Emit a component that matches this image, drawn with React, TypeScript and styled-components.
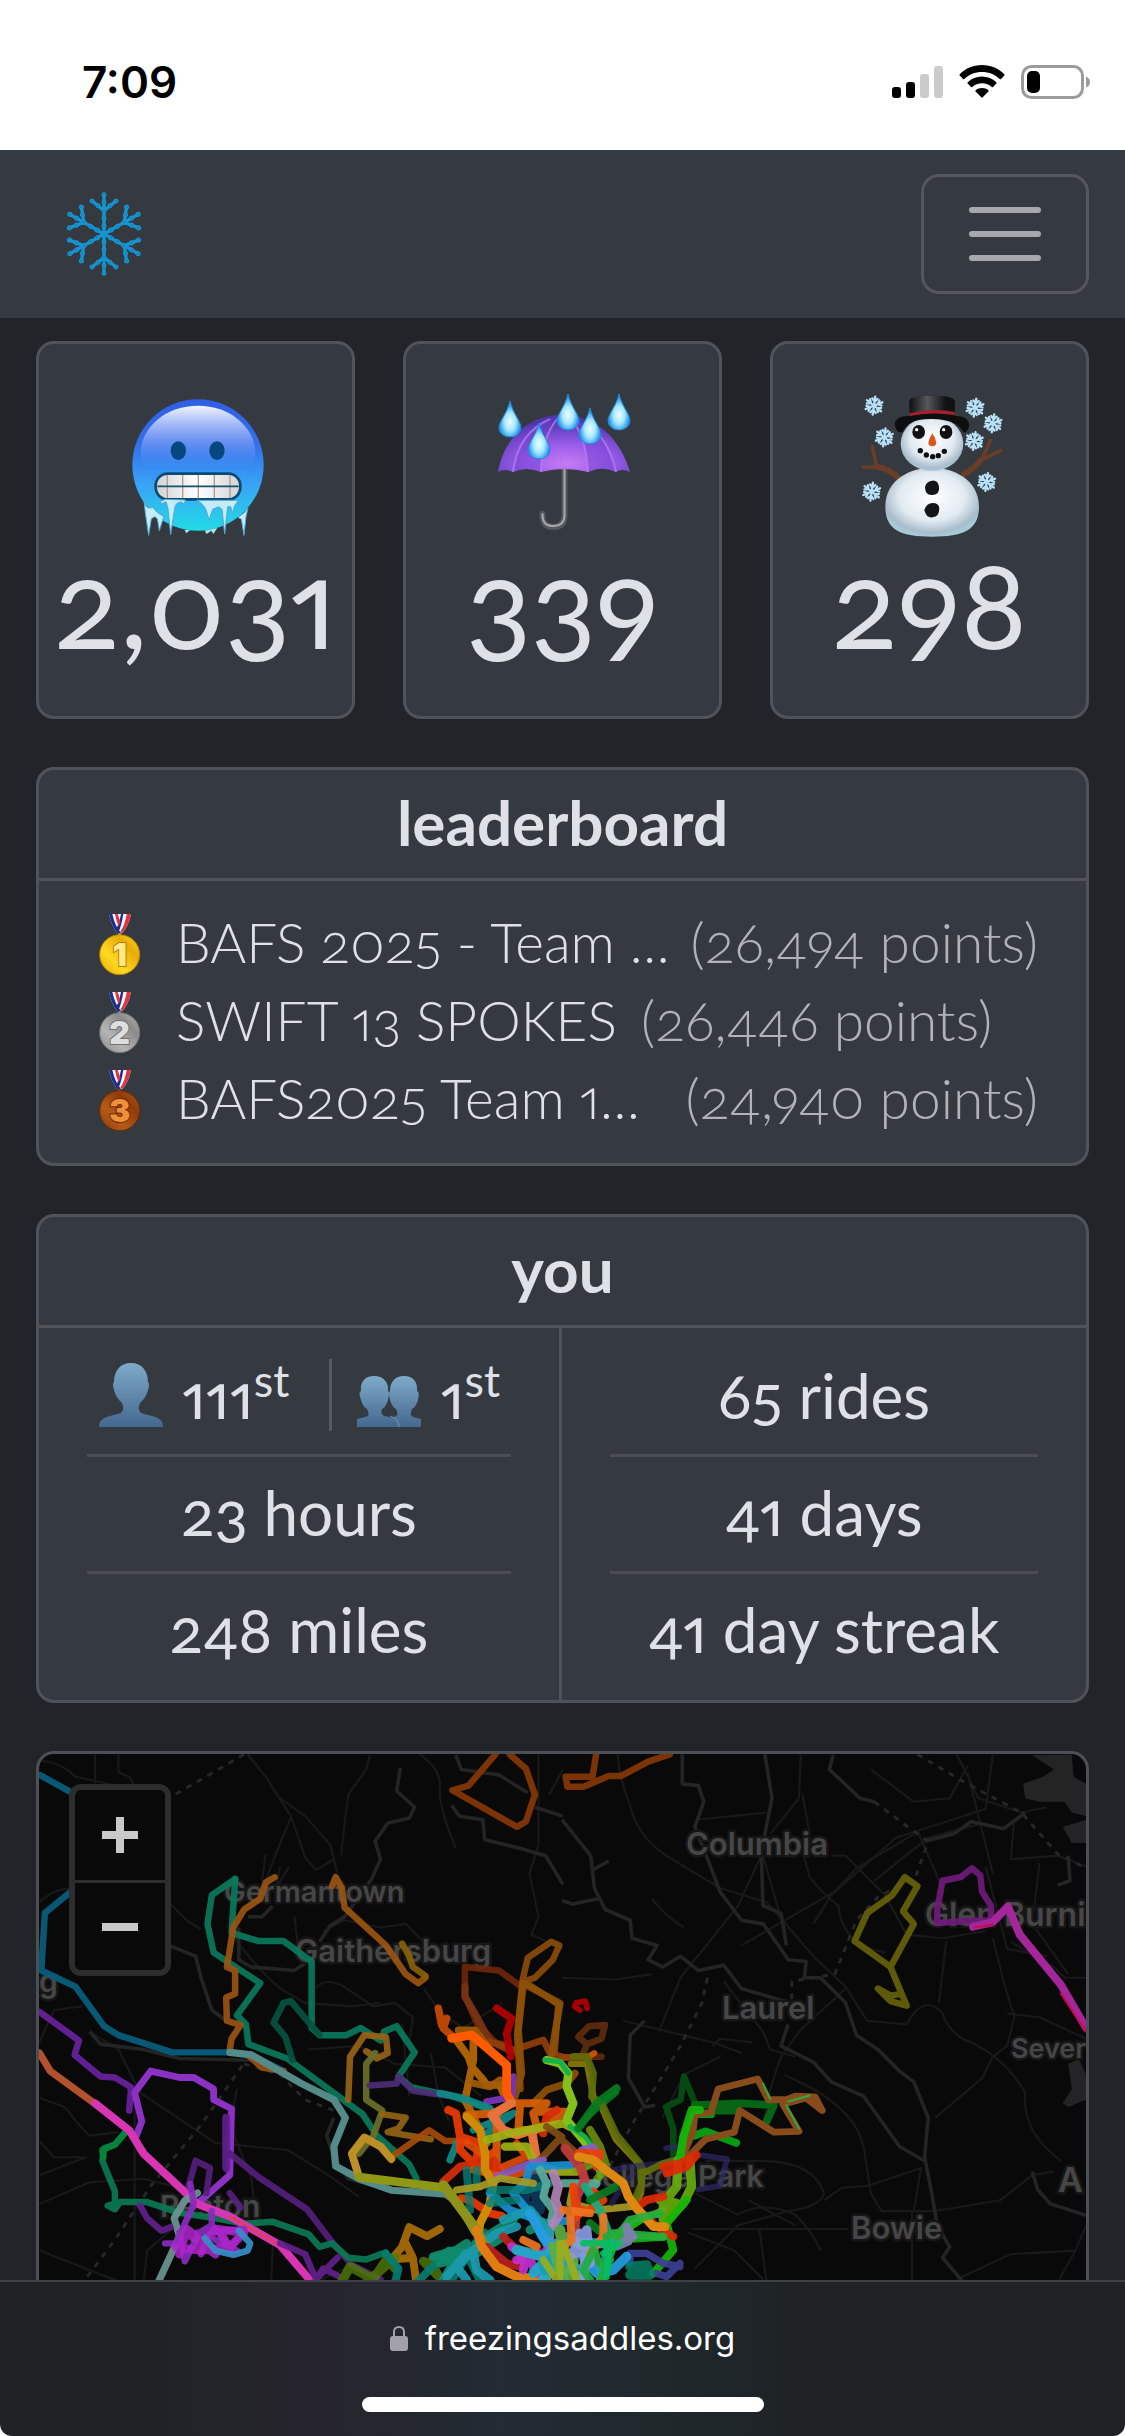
import React from "react";
import styled, { createGlobalStyle } from "styled-components";

const GlobalStyle = createGlobalStyle`
  *, *::before, *::after { box-sizing: border-box; }
  html, body { margin: 0; padding: 0; background: #ffffff; }
  body { font-family: Lato, "Open Sans", sans-serif; color: #dee2e6; font-variant-numeric: oldstyle-nums proportional-nums; }
  h2, p, ol, ul { margin: 0; padding: 0; }
`;

const border = "#505459";
const panel = "#353a40";

const Screen = styled.div`
  display: flex;
  flex-direction: column;
  min-height: 2000px;
  height: 100vh;
`;

const StatusBar = styled.header`
  flex: none;
  display: flex;
  align-items: center;
  justify-content: space-between;
  height: 150px;
  padding: 14px 34px 0 82px;
  background: #ffffff;
  color: #000000;
`;

const Time = styled.time`
  font: 600 44px/48px Inter, sans-serif;
  font-variant-numeric: normal;
`;

const StatusIcons = styled.div`
  display: flex;
  align-items: center;
  gap: 16px;
`;

const Nav = styled.nav`
  flex: none;
  display: flex;
  align-items: center;
  justify-content: space-between;
  padding: 24px 36px;
  background: ${panel};
`;

const Brand = styled.a`
  display: flex;
  padding: 0 24px;
`;

const MenuButton = styled.button`
  display: flex;
  flex-direction: column;
  align-items: center;
  justify-content: center;
  gap: 18px;
  width: 168px;
  height: 120px;
  padding: 0;
  background: transparent;
  border: 3px solid #54585d;
  border-radius: 18px;
`;

const MenuLine = styled.span`
  width: 72px;
  height: 6px;
  border-radius: 3px;
  background: #a6a8ab;
`;

const Main = styled.main`
  flex: 1;
  min-height: 0;
  display: flex;
  flex-direction: column;
  gap: 48px;
  padding: 23px 36px 0;
  background: #212529;
`;

const Stats = styled.ul`
  display: grid;
  grid-template-columns: repeat(3, 1fr);
  gap: 48px;
  list-style: none;
`;

const Card = styled.section`
  flex: none;
  background: ${panel};
  border: 3px solid ${border};
  border-radius: 18px;
  overflow: hidden;
`;

const StatCard = styled.li`
  display: flex;
  flex-direction: column;
  align-items: center;
  padding: 48px 0 52px;
  background: ${panel};
  border: 3px solid ${border};
  border-radius: 18px;
`;

const StatValue = styled.span`
  font-size: 122px;
  line-height: 124px;
`;

const CardTitle = styled.h2`
  padding: 16px 18px 20px;
  border-bottom: 3px solid ${border};
  text-align: center;
  font-size: 62px;
  line-height: 72px;
  font-weight: 700;
`;

const Ranks = styled.ol`
  padding: 24px 48px 24px 58px;
  list-style: none;
`;

const RankRow = styled.li`
  display: flex;
  align-items: center;
  height: 78px;
  font-size: 55px;
  line-height: 72px;
  font-weight: 300;
  white-space: nowrap;
`;

const TeamName = styled.span<{ $fill?: boolean }>`
  flex: ${(p) => (p.$fill ? "1 1 0" : "0 1 auto")};
  min-width: 0;
  overflow: hidden;
  text-overflow: ellipsis;
  padding-bottom: 4px;
  margin-left: 34px;
  margin-right: ${(p) => (p.$fill ? "4px" : "24px")};
`;

const Points = styled.span`
  padding-bottom: 4px;
  color: #b0b4b8;
`;

const YouGrid = styled.div`
  display: grid;
  grid-template-columns: 523fr 524fr;
`;

const YouColumn = styled.div`
  display: flex;
  flex-direction: column;
  padding: 12px 48px;
  &:first-child { border-right: 3px solid ${border}; }
`;

const YouCell = styled.div`
  display: flex;
  align-items: center;
  justify-content: center;
  height: 114px;
  padding-bottom: 4px;
  font-size: 62px;
  line-height: 90px;
  white-space: nowrap;
  font-weight: 400;
  & + & { border-top: 3px solid #4a4e53; height: 117px; }
`;

const RankStat = styled.span`
  display: flex;
  align-items: center;
  gap: 18px;
  height: 72px;
  padding-right: 40px;
  line-height: 72px;
  & + & { border-left: 3px solid #565a5f; padding: 0 0 0 24px; }
`;

const Sup = styled.sup`
  font-size: 45px;
  line-height: 0;
`;

const MapPanel = styled.section`
  flex: 1;
  min-height: 0;
  position: relative;
  overflow: hidden;
  background: #090909;
  border: 3px solid #4c5055;
  border-bottom: 0;
  border-radius: 18px 18px 0 0;
`;

const MapSvg = styled.svg`
  display: block;
  width: 100%;
  height: 100%;
`;

const ZoomControl = styled.div`
  position: absolute;
  top: 30px;
  left: 30px;
  display: flex;
  flex-direction: column;
  border: 6px solid #2d2d2d;
  border-radius: 12px;
  overflow: hidden;
`;

const ZoomButton = styled.button`
  display: flex;
  align-items: center;
  justify-content: center;
  width: 90px;
  height: 90px;
  padding: 0;
  border: 0;
  background: #090909;
  & + & { border-top: 3px solid #2d2d2d; }
`;

const BrowserBar = styled.footer`
  flex: none;
  display: flex;
  flex-direction: column;
  align-items: center;
  height: 156px;
  padding-top: 34px;
  border-top: 2px solid #3e4144;
  border-radius: 0 0 12px 12px;
  background: linear-gradient(90deg, #1f2326 0%, #1f2326 14%, #26242c 27%, #24272f 36%, #222b34 46%, #1f282b 58%, #1e2225 72%, #1e2225 100%);
`;

const Address = styled.a`
  display: flex;
  align-items: center;
  gap: 17px;
  color: #ffffff;
  text-decoration: none;
  font: 400 33px/44px Inter, sans-serif;
`;

const HomeIndicator = styled.div`
  width: 402px;
  height: 15px;
  margin-top: 37px;
  border-radius: 8px;
  background: #ffffff;
`;

function SignalIcon() {
  return (
    <svg width="51" height="34" viewBox="0 0 51 34" aria-hidden="true">
      <rect x="0" y="22" width="9" height="11" rx="3" />
      <rect x="14" y="17" width="9" height="16" rx="3" />
      <rect x="28" y="9" width="9" height="24" rx="3" fill="#cbcbcb" />
      <rect x="42" y="1" width="9" height="32" rx="3" fill="#cbcbcb" />
    </svg>
  );
}

function WifiIcon() {
  return (
    <svg width="46" height="34" viewBox="0 0 46 34" aria-hidden="true">
      <path d="M23 0C14 0 6 3.600 0.700 9.300Q0.200 10 0.700 10.600L4 14Q4.700 14.600 5.300 14C10 9.400 16 6.900 23 6.900S36 9.400 40.700 14Q41.300 14.600 42 14L45.300 10.600Q45.800 10 45.300 9.300C40 3.600 32 0 23 0Z" />
      <path d="M23 11.500C17.500 11.500 12.500 13.600 8.700 17.200Q8 17.900 8.700 18.500L12 21.900Q12.700 22.500 13.300 21.900C16 19.500 19.300 18.300 23 18.300S30 19.500 32.700 21.900Q33.300 22.500 34 21.900L37.300 18.500Q38 17.900 37.300 17.200C33.500 13.600 28.500 11.500 23 11.500Z" />
      <path d="M23 23C20.500 23 18.300 23.800 16.600 25.200Q16 25.900 16.600 26.500L22.300 32.300Q23 33 23.700 32.300L29.400 26.500Q30 25.900 29.400 25.200C27.700 23.800 25.500 23 23 23Z" />
    </svg>
  );
}

function BatteryIcon() {
  return (
    <svg width="70" height="34" viewBox="0 0 70 34" aria-hidden="true">
      <rect x="1.500" y="1.500" width="60" height="31" rx="9" fill="none" stroke="#9b9b9b" strokeWidth="3" />
      <rect x="6" y="6" width="13" height="22" rx="5" />
      <path d="M65 11.500Q69 13 69 17T65 22.500Z" fill="#9b9b9b" />
    </svg>
  );
}

function SnowflakeLogo() {
  return (
    <svg width="88" height="88" viewBox="-132 -132 264 264" role="img" aria-label="Freezing Saddles">
      {[0, 60, 120, 180, 240, 300].map((a) => (
        <g key={a} transform={`rotate(${a})`}>
          <path d="M0 0V-118M0 -70L-36 -99M0 -70L36 -99" fill="none" stroke="#1594d2" strokeWidth="10" strokeLinecap="round" />
          {[[0, -118], [0, -95], [0, -70], [0, -46], [0, -23], [-18, -85], [18, -85], [-36, -99], [36, -99]].map(([x, y]) => (
            <circle key={`${x},${y}`} cx={x} cy={y} r="6" fill="#1687be" stroke="#149bdc" strokeWidth="3" />
          ))}
        </g>
      ))}
    </svg>
  );
}

function FreezingFace() {
  return (
    <svg width="148" height="148" viewBox="364 216 444 444" role="img" aria-label="Freezing days">
      <defs>
        <linearGradient id="face" x1="0" y1="0" x2="0" y2="1">
          <stop offset="0" stopColor="#2f5fe6" />
          <stop offset=".35" stopColor="#3470ea" />
          <stop offset=".65" stopColor="#38a4f6" />
          <stop offset="1" stopColor="#22dbe6" />
        </linearGradient>
        <linearGradient id="shine" x1="0" y1="0" x2="0" y2="1">
          <stop offset="0" stopColor="#f1f6ff" />
          <stop offset=".3" stopColor="#9db2f8" stopOpacity=".75" />
          <stop offset=".65" stopColor="#5f92f8" stopOpacity="0" />
        </linearGradient>
        <linearGradient id="teeth" x1="0" y1="0" x2="1" y2="0">
          <stop offset="0" stopColor="#d2d2d4" />
          <stop offset=".5" stopColor="#ffffff" />
          <stop offset="1" stopColor="#d2d2d4" />
        </linearGradient>
      </defs>
      <circle cx="592" cy="435" r="197" fill="url(#face)" />
      <ellipse cx="592" cy="400" rx="172" ry="143" fill="url(#shine)" />
      <ellipse cx="533" cy="392" rx="23" ry="28" fill="#07477f" />
      <ellipse cx="649" cy="392" rx="23" ry="28" fill="#07477f" />
      <rect x="465" y="461" width="254" height="77" rx="36" fill="url(#teeth)" stroke="#0b4a73" strokeWidth="8" />
      <path d="M500 466V534M546 465V535M593 465V535M641 465V535M688 466V534" stroke="#a99c94" strokeWidth="4" />
      <path d="M470 499H714" stroke="#17506d" strokeWidth="5" />
      <path d="M430 540L436 558Q442 568 456 562Q466 578 490 590L486 600L476 632L470 596L462 590L452 596L444 646L434 580ZM480 544L494 538L554 540L551 552L542 546Q530 546 524 556L518 590L510 644L502 566L496 545L482 552ZM588 541H714L702 556L696 580L690 560L681 560L672 642L664 568L654 560L636 568L625 600L617 572Q608 550 588 541ZM742 564L736 590L730 646L722 598L712 592Q730 582 742 564Z" fill="#c6ebf8" stroke="#4eaad0" strokeWidth="3" />
      <path d="M552 630H568L557 640ZM612 632L650 624L638 642L632 632L618 642Z" fill="#a4e6f4" />
    </svg>
  );
}

function Drop({ x, y }: { x: number; y: number }) {
  return <path transform={`translate(${x} ${y})`} d="M0 0C3 13 11 20 11 27A11 9 0 0 1 -11 27C-11 20 -3 13 0 0Z" fill="url(#drop)" stroke="#2587d5" strokeWidth="1" />;
}

function UmbrellaIcon() {
  return (
    <svg width="148" height="148" viewBox="109 72 148 148" role="img" aria-label="Rainy days">
      <defs>
        <radialGradient id="canopy" cx=".52" cy=".85" r=".75">
          <stop offset="0" stopColor="#c57bf5" />
          <stop offset=".45" stopColor="#9a5cea" />
          <stop offset="1" stopColor="#4e35ae" />
        </radialGradient>
        <radialGradient id="drop" cx=".5" cy=".58" r=".5">
          <stop offset="0" stopColor="#effcff" />
          <stop offset=".5" stopColor="#a5e8ff" />
          <stop offset="1" stopColor="#1c91e8" />
        </radialGradient>
      </defs>
      <path d="M184.500 148V196Q184 207 173 207T162.500 194" fill="none" stroke="#55575b" strokeWidth="6" strokeLinecap="round" />
      <path d="M184.500 148V196Q184 206 173 206T162.500 194" fill="none" stroke="#a7a9ad" strokeWidth="2" strokeLinecap="round" />
      <path d="M118 152C124 118 148 95 182 95S240 118 250 152Q241 148 236 152Q222 145 208 152Q184 146 161 152Q146 146 133 152Q125 148 118 152Z" fill="url(#canopy)" />
      <path d="M133 152Q138 112 176 96Q160 116 161 152Q146 146 133 152ZM208 152Q206 115 190 96Q226 110 236 152Q222 145 208 152Z" fill="#7140d0" opacity=".45" />
      <path d="M133 152Q138 113 170 99M161 152Q162 116 178 98M208 152Q206 115 190 98M236 152Q228 116 204 102" fill="none" stroke="#bd7df6" strokeWidth="2" opacity=".7" />
      <Drop x={130} y={81} /><Drop x={188} y={74} /><Drop x={239} y={74} /><Drop x={210} y={88} /><Drop x={159} y={103} />
    </svg>
  );
}

const flakes = [[70, 107], [101, 202], [63, 365], [373, 113], [427, 160], [371, 213], [408, 336]];

function SnowmanIcon() {
  return (
    <svg width="148" height="148" viewBox="16 66 444 444" role="img" aria-label="Snowy days">
      <defs>
        <radialGradient id="snow" cx=".5" cy=".42" r=".58">
          <stop offset="0" stopColor="#ffffff" />
          <stop offset=".6" stopColor="#e2ebf2" />
          <stop offset=".9" stopColor="#a9bccb" />
          <stop offset="1" stopColor="#a5cbd8" />
        </radialGradient>
        <linearGradient id="hat" x1="0" y1="0" x2="1" y2="0">
          <stop offset="0" stopColor="#101113" />
          <stop offset=".4" stopColor="#55575a" />
          <stop offset=".8" stopColor="#111214" />
        </linearGradient>
      </defs>
      <g fill="none" stroke="#6a3d28" strokeLinejoin="round">
        <path d="M146 326Q115 296 78 290M334 316Q372 296 394 266" strokeWidth="17" />
        <path d="M78 290L65 230M82 292L38 291M394 268L419 212M394 270L450 241" strokeWidth="11" strokeLinecap="round" />
      </g>
      <path d="M244 294C196 290 104 320 104 410C104 480 150 500 244 500S385 480 385 410C385 320 292 290 244 294Z" fill="url(#snow)" />
      <ellipse cx="244" cy="221" rx="94" ry="82" fill="url(#snow)" />
      <path d="M132 162Q135 136 178 138L176 92Q184 77 244 77T312 92L312 138Q352 136 356 164Q350 194 336 184Q318 148 244 147T156 186Q136 192 132 162Z" fill="#0d0e10" />
      <path d="M176 92Q184 77 244 77T312 92L312 124Q250 116 178 132Z" fill="url(#hat)" />
      <path d="M178 130Q244 112 312 126V136Q244 124 178 138Z" fill="#a3202d" />
      <ellipse cx="204" cy="186" rx="19" ry="21" fill="#111" /><ellipse cx="286" cy="186" rx="19" ry="21" fill="#111" />
      <circle cx="198" cy="179" r="5" fill="#fff" /><circle cx="279" cy="179" r="5" fill="#fff" />
      <path d="M245 190Q256 205 257 219Q255 229 245 229T233 219Q235 204 245 190Z" fill="#d9581f" />
      {[[209, 242], [227, 255], [246, 260], [263, 257], [281, 244]].map(([x, y]) => <circle key={x} cx={x} cy={y} r="8" fill="#0d0e10" />)}
      <path d="M223 352Q226 334 244 332T265 350Q268 372 246 375T223 352Z" fill="#141516" />
      <path d="M221 420Q228 399 246 399T266 414Q266 440 246 442T221 420Z" fill="#141516" />
      {flakes.map(([x, y]) => (
        <g key={x} transform={`translate(${x} ${y}) rotate(8)`} stroke="#b8e2f8" strokeWidth="7" strokeLinecap="round" fill="none">
          {[0, 60, 120, 180, 240, 300].map((a) => <path key={a} transform={`rotate(${a})`} d="M0 0V-27M0 -12L-8 -21M0 -12L8 -21" />)}
        </g>
      ))}
    </svg>
  );
}

const medals = [
  { light: "#ffd91f", base: "#e7ab09", edge: "#b97d06", ink: "#ffe88a" },
  { light: "#b4b4b4", base: "#8b8b8b", edge: "#727272", ink: "#dedede" },
  { light: "#b55a18", base: "#8f3a0a", edge: "#6f2a05", ink: "#f0903a" },
];

function Medal({ place }: { place: number }) {
  const m = medals[place - 1];
  return (
    <svg width="45" height="63" viewBox="50 36 135 189" role="img" aria-label={`Place ${place}`}>
      <defs>
        <linearGradient id={`medal${place}`} x1="0" y1="1" x2="1" y2="0">
          <stop offset="0" stopColor={m.base} /><stop offset=".35" stopColor={m.light} /><stop offset=".7" stopColor={m.base} /><stop offset="1" stopColor={m.light} />
        </linearGradient>
      </defs>
      <path d="M86 39H152Q145 75 126 96H110Q94 76 86 39Z" fill="#f4f6fb" />
      <path d="M86 39H96Q104 76 122 96H110Q94 76 86 39ZM122 39H129Q123 76 114 94L108 84Q119 62 122 39Z" fill="#1c2f8d" />
      <path d="M104 39H112L120 62L115 76Q108 62 104 39ZM139 39H152Q145 75 126 96L120 92Q134 72 139 39Z" fill="#dd3543" />
      <circle cx="118" cy="103" r="6" fill={m.light} />
      <circle cx="118" cy="161" r="60" fill={`url(#medal${place})`} stroke={m.edge} strokeWidth="3" />
      <text x="118" y="195" textAnchor="middle" fontFamily="Inter, sans-serif" fontWeight="900" fontSize="96" fill={m.ink} stroke={m.edge} strokeWidth="6" paintOrder="stroke" style={{ fontVariantNumeric: "normal" }}>{place}</text>
    </svg>
  );
}

function PersonIcon() {
  return (
    <svg width="66" height="66" viewBox="0 0 66 66" role="img" aria-label="Individual rank">
      <defs>
        <linearGradient id="bust" x1="0" y1="0" x2="0" y2="1"><stop offset="0" stopColor="#7eaac9" /><stop offset="1" stopColor="#44688e" /></linearGradient>
      </defs>
      <path d="M33 1C22 1 16 9 16 20Q14 22 16 28Q18 36 24 41Q28 50 20 52C8 55 1 56 1 65H65C65 56 58 55 46 52Q38 50 42 41Q48 36 50 28Q52 22 50 20C50 9 44 1 33 1Z" fill="url(#bust)" />
    </svg>
  );
}

function PeopleIcon() {
  return (
    <svg width="66" height="66" viewBox="0 0 66 66" role="img" aria-label="Team rank">
      <path d="M18 14C9 14 4 20 5 29Q2 30 5 38Q7 45 11 47Q15 54 9 55L1 57V65H43V57L28 54Q24 51 26 47Q30 45 32 38Q34 30 32 29C33 20 27 14 18 14Z" fill="url(#bust)" />
      <path d="M48 14C39 14 34 20 34 29Q32 30 34 38Q36 45 40 47Q44 54 37 55Q43 58 43 65H65V57L57 55Q53 53 56 47Q60 45 62 38Q64 30 61 29C62 20 57 14 48 14Z" fill="url(#bust)" />
      <path d="M34 54Q43 57 43 65" fill="none" stroke="#7298b9" strokeWidth="1" />
    </svg>
  );
}

type Line = [color: string, d: string, width?: number, opacity?: number];

/* Road network, west and east halves of the tile set */
const westRoads = [
  "M110 85Q170 90 210 130L264 142L350 160M265 68V150M330 68V118L360 130L382 170",
  "M690 68L740 130L810 240L850 355L880 390L930 360M780 190L850 240L920 320L940 400M810 245L770 340L740 420",
  "M1030 70L1020 110L970 180L960 260L950 350M1170 68Q1230 110 1225 160T1270 330",
  "M110 480Q150 440 210 440M470 480L520 530L560 555M740 345L730 420M780 380L770 440L805 380",
  "M640 560Q700 650 780 720L850 760L980 770L1060 760M820 520L830 600M900 560L960 530L1060 550L1130 540L1190 600",
  "M880 720Q900 690 950 710L1040 770L1100 760L1150 800L1140 870M1180 720L1230 790L1290 830",
  "M110 870L150 780L230 770M250 840L330 890L390 1010L600 1150L800 1170L900 1230L1000 1300",
  "M110 1025L180 1050L220 1100L250 1130L330 1120M110 1145L150 1190L240 1190L110 1240M375 990L375 1540",
  "M110 1450L340 1540M400 1540L410 1450L480 1390M755 1540L760 1430M980 1490Q900 1530 870 1540",
  "M860 890L1000 880L1100 930L1240 940L1340 1020M1200 900L1220 1010L1250 1090M1120 820L1140 1020",
  "M1500 68V320L1475 400L1500 520L1480 570L1568 610M1530 180L1568 110M1290 830L1400 760",
  "M660 1000L640 1100L700 1250L720 1400M110 1320L250 1260L400 1250L560 1290",
];
const westWater = [
  "M1115 105L1105 170L1155 215L1140 245L1080 260L1045 310L1060 360L1035 415L960 520L920 545L890 590",
  "M470 600L545 630L560 690L590 780L630 810M250 840L280 875L400 890L500 915L700 920",
  "M1270 70L1285 110L1390 125L1470 175M1258 210L1280 240L1345 250L1350 305L1450 330L1520 350L1568 430",
  "M930 1080L910 1130L930 1190L970 1250L1100 1285L1240 1300M665 550L665 640L700 660L820 670L850 650M690 520L730 520L760 490",
  "M1490 215L1568 240",
];
const eastRoads = [
  "M155 68Q160 140 190 210Q205 290 290 350L440 440L570 480L640 560L700 630L790 715L850 810L960 820Q1010 730 1060 790Q1080 850 1140 870Q1240 920 1290 1010Q1280 1120 1390 1200",
  "M580 290L660 190L665 70M375 250L570 230M670 180L690 290M750 350L790 350L900 460L960 570L1060 580L1180 560M500 600L760 450L820 385L980 290",
  "M560 340L490 490L370 640L330 690L270 840M250 470Q290 520 340 550M0 690L150 695L250 680M170 810L420 870L500 900",
  "M560 350L620 560M670 340L690 410Q720 450 770 490Q780 600 900 620M790 720L660 840L610 910L580 1000L560 1100",
  "M700 540L750 460L930 300L1180 220L1200 70M860 110L980 200L1080 190L1130 100M870 420L1020 300L1170 260",
  "M1100 68L1160 190L1280 230L1350 215M990 280L1020 350L1060 440M1180 380L1240 610L1350 630",
  "M1200 580L1230 700L1260 800L1240 880L1200 910L1170 970L1040 1080M1250 590L1370 660L1400 690H1460",
  "M1130 120L1200 400M1260 250L1250 360L1380 350L1460 380M1330 370L1310 540L1410 680M1240 790L1330 800L1460 860",
  "M620 960L700 1000Q820 1070 840 1160L860 1290L890 1340L1040 1340L1220 1310L1310 1240L1370 1230",
  "M400 1200L550 1200Q700 1200 730 1290Q720 1330 630 1340L490 1380L370 1500M370 1290L490 1350Q560 1310 650 1350Q700 1400 720 1450",
  "M360 1390H570L800 1390M550 1390L570 1540M975 1340V1540M520 1310L650 1380M730 1310L780 1275L850 1270L1000 1220L980 1340",
  "M1100 1530L1250 1460L1430 1450L1460 1380M1430 1450L1380 1540M350 1400L480 1450L560 1530M1070 590L1050 760",
  "M420 880L440 860L530 870M450 700L560 840L580 890L650 910M280 1080L340 960L440 910",
];
const eastWater = [
  "M335 68V150L380 155L395 200L370 270L410 370L440 450L500 530L560 540L610 610L630 640L680 645L675 690L720 690L790 760L820 850L880 890L940 950L980 980L1020 1080L1010 1190L1030 1290L1045 1380L1080 1440L1060 1470L1120 1540",
  "M565 68L585 190L555 340L560 490L610 510L625 600",
  "M0 250L80 350L90 440L120 500L190 530L195 580L265 600L240 640L280 660L330 630L380 670L450 655L500 720L600 750L640 760",
  "M755 70L745 110L830 190L870 200M1010 310L1090 290L1140 255L1230 275L1290 230",
  "M630 820L610 880L700 925L750 980L840 1020L890 1090L940 1160L1010 1200M230 810L190 850L185 970L230 1050L260 1045",
  "M1310 1230L1325 1280L1360 1320L1460 1352M1410 350L1415 420L1380 432M0 475L30 485L100 470M85 390L130 365",
];
const borders = ["M680 68L470 190", "M675 935L560 1100L420 1270L320 1420L230 1540", "M680 930L780 960L850 1030L930 1060"];
const eastBorders = ["M990 68L1120 145L1280 230L1380 345L1460 385", "M870 200L990 290L1020 310L985 410L880 465L820 530L760 680L640 700L640 750", "M405 690L390 760L330 880L270 980L200 1090L130 1220"];

/* Ride tracks */
const westRides: Line[] = [
  ["#08607e", "M110 125L210 180M210 440L125 510L115 670L210 715L290 825L330 850L480 898H640L700 905L790 950"],
  ["#0a7a5c", "M655 415L590 460L578 540L595 620L725 705L660 795L685 820L692 875L800 915L1010 1070L1050 1130L1140 1210L1160 1250"],
  ["#0a7a5c", "M655 415L645 565L720 588H790L868 645V830L890 850H965L1005 830L1060 865L1070 840L1105 825L1155 898L1110 965L1145 995L1260 1020L1370 1060"],
  ["#07523f", "M815 920L795 855L762 815L790 760L810 755L890 850"],
  ["#9b5413", "M765 410L740 425L725 470L680 500L650 550L632 660L655 670V735L630 745L632 810L670 822L645 860L640 890M690 905L730 940L790 950"],
  ["#9b5413", "M925 435L935 410L952 440L960 495L1075 600L1130 680L1165 705L1185 690"],
  ["#876108", "M1120 595L1140 630L1150 660L1185 685"],
  ["#6e260c", "M1295 740V660L1390 670L1445 710M1295 740L1330 820L1390 880L1430 900"],
  ["#873705", "M1380 68L1305 155L1260 168L1440 270L1465 255L1490 180L1465 108L1420 68"],
  ["#8b4c0a", "M1450 1000L1440 850L1455 700L1470 635L1535 590L1558 600L1540 640L1490 690L1460 700L1555 765L1545 900"],
  ["#548b89", "M640 898L700 905L840 985L930 1030L962 1080L930 1160L935 1215L1000 1250L1090 1282L1240 1292L1280 1320", 20, 1],
  ["#6a21a0", "M110 785L220 865L208 905L280 965L320 968L365 995L360 1060"],
  ["#8c31c4", "M380 1130L395 1090L375 1010L420 950L500 968H540L595 1000V1030L645 1055L640 1240L600 1275L555 1315", 19, 1],
  ["#5e218c", "M630 1080V1220", 22],
  ["#55207c", "M640 1180L720 1245L855 1335L920 1420L980 1490L1060 1530"],
  ["#55207c", "M520 1290L545 1200L585 1220L575 1290M640 1290L670 1330"],
  ["#0a7853", "M350 1120L320 1155L290 1165L285 1200L320 1285V1320L300 1325L320 1335L335 1315H410L500 1345L600 1360L680 1375L760 1370L860 1405L890 1440L925 1430L970 1470L1020 1475L1075 1455"],
  ["#068439", "M350 1120L320 1155L285 1170L288 1190"],
  ["#b2512b", "M110 900L140 950L270 1045", 20, 1],
  ["#d835b5", "M265 1040L360 1115L400 1180L550 1320L640 1355L780 1435L870 1540", 22, 1],
  ["#d8483d", "M640 1355L780 1435", 6],
  ["#6e9595", "M440 1540L500 1410L485 1360L515 1310L550 1290", 20],
  ["#892bbd", "M530 1265L540 1320L490 1430L460 1430M500 1400L515 1480L555 1400L590 1380V1340M550 1400L680 1390L645 1440L590 1380L560 1460M600 1420L660 1450"],
  ["#ae24cb", "M490 1440L560 1450L640 1440L680 1400L600 1390L570 1430L520 1390L500 1460M520 1400L600 1460M610 1390L640 1450", 24, 0.85],
  ["#368ec8", "M570 1415L600 1450L650 1462L690 1450L697 1430L665 1395"],
  ["#61218a", "M390 1325L410 1360L450 1395L475 1385M780 1430L850 1460L880 1530L940 1470M880 1530L900 1500L940 1520"],
  ["#966316", "M970 1030L975 910L1015 850L1075 855L1080 900L1050 915L1020 895"],
  ["#6a6f29", "M1045 900L1020 930V1030L1065 1060L1040 1130L1000 1180"],
  ["#4d2d77", "M1030 990L1105 985L1110 965L1150 1005L1260 1020"],
  ["#936414", "M1065 1070L1130 1080L1110 1110L1080 1120L1200 1140"],
  ["#a64b0b", "M1090 1190L1195 1115L1240 1145H1300"],
  ["#bb8e26", "M1090 1195L1060 1160L1015 1135L980 1180L1000 1245", 22, 1],
  ["#8f9814", "M1000 1245L1240 1275L1290 1340L1325 1400", 24, 1],
  ["#a96f08", "M1225 1390L1190 1410L1140 1385L1120 1440L1090 1475L1150 1470L1130 1430M1150 1470L1160 1540", 22],
  ["#4f7c06", "M950 1540L975 1495L1040 1530L1080 1470L1100 1500M1020 1540L1100 1470M1180 1480L1220 1520L1200 1480", 26, 0.8],
  ["#057c70", "M1100 1540L1110 1500L1075 1460M1160 1540L1250 1450L1300 1460L1340 1540M1210 1470L1280 1480L1350 1400M1260 1530L1310 1450", 22],
];
const eastRides: Line[] = [
  ["#873705", "M95 68L85 130H10L15 158H60L130 128H165L240 88L300 68"],
  ["#66620b", "M815 588L850 510L920 460L955 410L990 435L950 505L980 540L915 660L815 588M915 660L960 768L915 755L880 720L915 740L945 735"],
  ["#701b7c", "M1045 538V500L1060 420L1110 410L1142 385L1165 405L1170 450L1195 490V530L1130 532Z"],
  ["#a4269a", "M1145 548L1200 535L1242 492L1275 570L1390 710L1460 830", 22, 1],
  ["#c80d45", "M1150 550L1200 542M1390 735L1460 840", 6],
  ["#b30000", "M35 770L40 760L65 755L70 775M35 770L50 780", 16],
  ["#602b0d", "M45 855L75 825L120 822L110 860L70 875ZM70 875L55 910H110"],
  ["#d35604", "M0 912L70 912L90 900", 17],
  ["#857c0a", "M25 930H70L90 1035L110 1050L150 1140L225 1220L220 1290L200 1330"],
  ["#04781c", "M50 1100L90 1060L150 1010"],
  ["#054f14", "M310 1190V1110L290 1050L330 1030L340 965L375 1050"],
  ["#076e17", "M370 1045L500 1040L590 1045L570 1090M430 1060H490", 22],
  ["#08a816", "M325 1200L340 1130L370 1070H415M370 1130L400 1118L485 1150", 22],
  ["#884c1c", "M330 1200L365 1120L370 1070L415 1065L435 1000L545 972L575 1030H625L650 1020L705 1022L725 1060L680 1025L615 1042L660 1118L590 1120L495 1060L480 1120L400 1140L350 1190", 19, 1],
  ["#2aae42", "M560 985L580 1028M630 1035L690 1018M625 1045L660 1110", 6],
  ["#2d2a66", "M290 1165L320 1160M390 1185L460 1195L440 1270L380 1280", 16, 0.7],
];
const coreRides: Line[] = [
  ["#793415", "M405 50V80L440 140L480 215L520 225"],
  ["#903f08", "M480 215L550 240L640 210L660 250L700 262H770", 17],
  ["#8e5009", "M555 380L575 310L565 180L580 40L690 100L665 250M610 400L650 360L710 340L735 310", 18],
  ["#b50000", "M500 115L545 145L530 190L542 260", 19],
  ["#c84b04", "M325 115L335 165M350 145L340 175L375 205", 19],
  ["#b96906", "M375 205L415 260L425 290L460 330L470 345H510L520 370M430 200L430 270L405 390L470 520", 19],
  ["#a25c08", "M385 180H435L480 240M430 340L480 350L510 330", 18],
  ["#7e36bc", "M550 320L545 390M470 395L525 385", 17],
  ["#0f8a86", "M330 370L400 385L480 415M470 490L550 430M360 570L380 520M550 430L430 480", 18],
  ["#d76008", "M410 435L500 430M560 400H650L610 430L620 470M500 430V600L490 640M570 410L565 480L620 480L710 425H620", 20],
  ["#ff5a00", "M365 205L425 195L455 220L530 285L530 370L545 400", 22, 1],
  ["#e8703a", "M545 400L485 435L520 480L560 495L605 480L625 600", 22, 1],
  ["#ee3a03", "M355 420L378 430L390 500V540L440 590L470 600M390 500L450 520L440 560M395 685L420 690L480 730L515 738", 20],
  ["#d92c07", "M340 635L390 590L490 570L510 600L440 590L470 550M640 490L650 440L680 420", 20],
  ["#e04a08", "M410 520L470 560L500 540M430 600L520 620L620 600M560 520L590 560L520 590", 18],
  ["#cf8a08", "M410 440L450 480L465 550V600L490 640L480 700L450 760L445 800", 21, 1],
  ["#9fb015", "M525 530H590L620 590L690 605H740M470 510L540 490L700 460L720 470", 21],
  ["#84c01a", "M650 270L690 280L715 310L710 350L730 400L710 450L760 510L800 560L810 600", 21, 1],
  ["#0bb24b", "M645 270L690 275L715 310M720 470L765 500L800 545L810 620", 13],
  ["#7a9d0c", "M780 480L810 530L830 590L800 630M740 600L790 580L760 560", 20, 0.8],
  ["#804d13", "M630 570L690 505L750 560M650 470L695 500", 18],
  ["#8b5bbb", "M500 620L600 580L640 570M755 540L790 530L810 560"],
  ["#105083", "M585 640L640 620L630 720L580 700L600 640M610 600L620 700", 24, 0.6],
  ["#188fd2", "M720 585L600 590L585 640L550 670L600 730L635 800L660 840M480 670L540 720L650 760L730 750", 20],
  ["#087f75", "M480 660H590L660 640M440 600V650M410 600L420 720M500 680L480 700L560 690", 20, 0.8],
  ["#5caa9b", "M630 600L650 640L640 680L670 720L660 770M700 640H800L780 660", 20],
  ["#a69a22", "M380 660L450 650L510 625L610 640M730 650L720 700L800 720L900 710", 18],
  ["#af84b6", "M670 610L685 650L675 690L690 730L660 780L655 830L690 870", 23],
  ["#c33b3d", "M705 535L750 590L765 630L740 680L735 780", 23],
  ["#ee3d05", "M745 550H810L800 590M730 650L740 740L760 720M790 665L820 690L780 720", 20],
  ["#16ae80", "M765 650L810 720L840 800L825 870L810 930", 20],
  ["#5c6c0b", "M730 260H770L790 310L785 380L815 400L860 495L930 580L935 640L910 700", 18],
  ["#0a7a20", "M745 475L800 400L860 355M780 690L860 650M780 760L830 800", 20],
  ["#2e285f", "M805 590L850 600L900 590L1000 580L1050 560M845 700L870 660L910 610", 15, 0.6],
  ["#62700b", "M940 610L1000 580L1060 565M840 800L910 760L1000 720", 17],
  ["#68af0c", "M1080 570L1085 650L1060 700L1010 750L1000 770M1045 570L1040 650L1000 700L1000 750M990 690L1040 700L990 730", 23, 0.9],
  ["#16b508", "M1110 420H1085L1060 500L1050 570M1070 690L1010 760L1030 840L970 910M1000 800L840 810L930 750", 20],
  ["#e02805", "M1000 590L1050 580L1100 555L1070 590L1010 610M930 705L950 690L1000 680M920 715L980 770L1030 800", 20],
  ["#dd8810", "M745 560L790 570L840 610L880 640L895 680L920 715L970 770L1005 770", 22, 1],
  ["#26ae3c", "M840 800L790 830L820 930M850 790L1000 800M840 830L900 750L990 730", 20],
  ["#3d3f96", "M1050 890L1000 880L950 850L900 850L900 880M1050 880L1010 920L980 910", 18],
  ["#057f64", "M900 890L950 885L960 915H900", 24, 0.85],
  ["#827db5", "M860 830L895 815L890 770L910 800L870 820", 20],
  ["#108d6d", "M310 860L380 840L410 820L370 880L340 930M440 820L500 780L550 750M330 880L440 850L520 800M600 780L640 760", 22],
  ["#1b9aae", "M410 930L380 890L430 840L500 790L560 770M430 850L440 900L480 930M350 920L410 850M520 750L600 720L660 790", 22],
  ["#8c9318", "M340 645L440 780L460 820", 24, 1],
  ["#bc201b", "M470 830L530 880L570 890L575 860M520 800L550 830L620 860", 20],
  ["#e07d12", "M440 780L455 830L500 890L560 920L650 930", 23, 1],
  ["#c031cf", "M545 830L600 870L620 910M560 870L640 850L680 820M590 850L580 900", 22],
  ["#1aafc5", "M560 840L640 860L670 840L640 930L690 870L700 930M760 820H840M610 910L660 860", 25],
  ["#249de2", "M600 730L640 800L720 900M670 820L720 880L760 910M760 860L800 910L850 900L890 860", 24],
  ["#5dae45", "M690 780L700 850L730 870L720 930M670 830L690 900L750 920M700 800L770 830", 27],
  ["#899ade", "M750 790L740 850L770 820L760 930M770 780L780 880M720 860L760 800", 24],
  ["#ee7420", "M720 730L725 810L700 830M780 850L820 800L820 740M580 810L620 830M700 720L780 730", 20],
  ["#1dad40", "M830 800L840 870L810 930L850 830M790 840L760 900L780 930", 20],
  ["#9aac1d", "M690 820V930M700 820L740 930M640 870L680 930", 18],
  ["#08bd62", "M760 820H840L830 920M870 820L820 850", 16],
];

function Strokes({ lines, boost = 1 }: { lines: Line[]; boost?: number }) {
  return (
    <g fill="none" strokeLinejoin="round" strokeLinecap="round">
      {lines.map(([color, d, width = 18, opacity = 0.92], i) => <path key={i} d={d} stroke={color} strokeWidth={width * boost} strokeOpacity={opacity} />)}
    </g>
  );
}

function Roads({ roads, water, dashed }: { roads: string[]; water: string[]; dashed: string[] }) {
  return (
    <g fill="none" strokeLinejoin="round">
      {roads.map((d) => <path key={d} d={d} stroke="#191919" strokeWidth="6" />)}
      {water.map((d) => <path key={d} d={d} stroke="#242424" strokeWidth="10" />)}
      {dashed.map((d) => <path key={d} d={d} stroke="#272727" strokeWidth="8" strokeDasharray="16 18" />)}
    </g>
  );
}

const places: [string, number, number, number][] = [
  ["Germantown", 224, 1902, 29],
  ["Gaithersburg", 295, 1962, 31],
  ["Columbia", 686, 1855, 31],
  ["Laurel", 722, 2019, 31],
  ["Glen Burni", 925, 1926, 32],
  ["Sever", 1011, 2058, 27],
  ["College Park", 580, 2187, 30],
  ["Bowie", 851, 2239, 31],
  ["A", 1058, 2192, 34],
  ["Reston", 160, 2217, 30],
  ["g", 39, 1992, 30],
];

function RideMap() {
  return (
    <MapSvg viewBox="39 1754 1047 526" preserveAspectRatio="xMidYMin slice" role="img" aria-label="Map of rides">
      <g transform="translate(0 1730) scale(.359)"><Roads roads={westRoads} water={westWater} dashed={borders} /></g>
      <g transform="translate(562 1730) scale(.359)">
        <path d="M1310 70L1420 68L1425 130L1460 150V240L1420 230L1400 200H1330L1290 190L1285 150L1340 130L1370 110ZM1395 270L1460 250V315L1420 315ZM1410 930L1440 915L1460 960V1030L1410 1050L1395 1040L1420 1000Z" fill="#242424" />
        <Roads roads={eastRoads} water={eastWater} dashed={eastBorders} />
      </g>
      <g fontFamily="Inter, sans-serif" fontWeight="600" fill="#464646" stroke="#161616" strokeWidth="5" paintOrder="stroke" strokeLinejoin="round">
        {places.map(([name, x, y, size]) => <text key={name} x={x} y={y} fontSize={size}>{name}</text>)}
      </g>
      <g transform="translate(0 1730) scale(.359)"><Strokes lines={westRides} /></g>
      <g transform="translate(562 1730) scale(.359)"><Strokes lines={eastRides} /></g>
      <g transform="translate(330 1970) scale(.3333)"><Strokes lines={coreRides} boost={1.2} /></g>
    </MapSvg>
  );
}

const stats = [
  { icon: <FreezingFace />, value: "2,031" },
  { icon: <UmbrellaIcon />, value: "339" },
  { icon: <SnowmanIcon />, value: "298" },
];

const teams = [
  { name: "BAFS 2025 - Team …", points: "26,494", fill: true },
  { name: "SWIFT 13 SPOKES", points: "26,446", fill: false },
  { name: "BAFS2025 Team 1…", points: "24,940", fill: true },
];

export default function App() {
  return (
    <>
      <GlobalStyle />
      <Screen>
        <StatusBar>
          <Time>7:09</Time>
          <StatusIcons><SignalIcon /><WifiIcon /><BatteryIcon /></StatusIcons>
        </StatusBar>
        <Nav>
          <Brand href="#"><SnowflakeLogo /></Brand>
          <MenuButton type="button" aria-label="Toggle navigation"><MenuLine /><MenuLine /><MenuLine /></MenuButton>
        </Nav>
        <Main>
          <Stats>
            {stats.map((s) => <StatCard key={s.value}>{s.icon}<StatValue>{s.value}</StatValue></StatCard>)}
          </Stats>
          <Card>
            <CardTitle>leaderboard</CardTitle>
            <Ranks>
              {teams.map((t, i) => (
                <RankRow key={t.name}>
                  <Medal place={i + 1} />
                  <TeamName $fill={t.fill}>{t.name}</TeamName>
                  <Points>({t.points} points)</Points>
                </RankRow>
              ))}
            </Ranks>
          </Card>
          <Card>
            <CardTitle>you</CardTitle>
            <YouGrid>
              <YouColumn>
                <YouCell>
                  <RankStat><PersonIcon /><span>111<Sup>st</Sup></span></RankStat>
                  <RankStat><PeopleIcon /><span>1<Sup>st</Sup></span></RankStat>
                </YouCell>
                <YouCell>23 hours</YouCell>
                <YouCell>248 miles</YouCell>
              </YouColumn>
              <YouColumn>
                <YouCell>65 rides</YouCell>
                <YouCell>41 days</YouCell>
                <YouCell>41 day streak</YouCell>
              </YouColumn>
            </YouGrid>
          </Card>
          <MapPanel>
            <RideMap />
            <ZoomControl>
              <ZoomButton type="button" aria-label="Zoom in">
                <svg width="36" height="36" viewBox="0 0 36 36"><path d="M18 0V36M0 18H36" stroke="#c9c9c9" strokeWidth="8" /></svg>
              </ZoomButton>
              <ZoomButton type="button" aria-label="Zoom out">
                <svg width="36" height="36" viewBox="0 0 36 36"><path d="M0 18H36" stroke="#c9c9c9" strokeWidth="8" /></svg>
              </ZoomButton>
            </ZoomControl>
          </MapPanel>
        </Main>
        <BrowserBar>
          <Address href="#">
            <svg width="18" height="26" viewBox="0 0 18 26" aria-hidden="true">
              <rect x="0" y="11" width="18" height="15" rx="3" fill="#a2a1a9" />
              <path d="M4 12V7Q4 2 9 2T14 7V12" fill="none" stroke="#a2a1a9" strokeWidth="2" />
            </svg>
            freezingsaddles.org
          </Address>
          <HomeIndicator />
        </BrowserBar>
      </Screen>
    </>
  );
}
